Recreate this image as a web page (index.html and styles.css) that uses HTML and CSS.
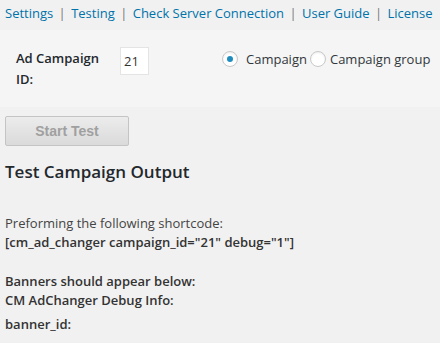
FILE: index.html
```html
<!DOCTYPE html>
<html lang="en">
<head>
    <meta charset="UTF-8">
    <title>CM Ad Changer - Testing</title>
    <link rel="stylesheet" href="styles.css">
</head>
<body>
    <div class="nav">
        <a href="#">Settings</a> <span class="sep">|</span>
        <a href="#">Testing</a> <span class="sep">|</span>
        <a href="#">Check Server Connection</a> <span class="sep">|</span>
        <a href="#">User Guide</a> <span class="sep">|</span>
        <a href="#">License</a>
    </div>

    <div class="panel">
        <label class="field-label" for="campaign-id">Ad Campaign ID:</label>
        <input class="id-input" id="campaign-id" type="text" value="21">
        <div class="radios">
            <label class="radio"><span class="dot checked"></span>Campaign</label>
            <label class="radio"><span class="dot"></span>Campaign group</label>
        </div>
    </div>

    <button class="btn" disabled>Start Test</button>

    <h2 class="title">Test Campaign Output</h2>

    <div class="output">
        <p>Preforming the following shortcode:<br>
            <strong>[cm_ad_changer campaign_id="21" debug="1"]</strong></p>
        <p><strong>Banners should appear below:<br>CM AdChanger Debug Info:</strong></p>
        <p class="debug-row"><strong>banner_id:</strong></p>
    </div>
</body>
</html>
```

FILE: styles.css
```css
body {
    margin: 0;
    background-color: #f1f1f1;
    font-family: "Open Sans", sans-serif;
    font-size: 13px;
    color: #444;
}

.nav {
    padding: 3px 5px 0;
    font-size: 13px;
    line-height: 20px;
    white-space: nowrap;
}

.nav a {
    color: #0073aa;
    text-decoration: none;
}

.nav .sep {
    color: #777;
    margin: 0 2px;
}

.panel {
    display: flex;
    align-items: flex-start;
    margin-top: 7px;
    padding: 17px 10px 10px 16px;
    height: 50px;
    background-color: #f5f5f5;
}

.field-label {
    flex-shrink: 0;
    width: 88px;
    margin-top: 1px;
    margin-right: 16px;
    font-size: 13px;
    font-weight: 600;
    line-height: 21px;
    color: #23282d;
}

.id-input {
    flex-shrink: 0;
    width: 21px;
    height: 20px;
    margin: 0;
    padding: 3px 3px;
    border: 1px solid #e4e4e4;
    background: #fff;
    font-family: "Open Sans", sans-serif;
    font-size: 13px;
    color: #333;
}

.radios {
    display: flex;
    margin-left: 73px;
    margin-top: 2px;
    font-size: 13px;
    color: #32373c;
    white-space: nowrap;
}

.radio {
    display: flex;
    align-items: center;
    line-height: 20px;
}

.dot {
    width: 14px;
    height: 14px;
    margin-right: 8px;
    border: 1px solid #c8c8c8;
    border-radius: 50%;
    background: #fff;
    box-shadow: inset 0 1px 2px rgba(0, 0, 0, 0.08);
    display: flex;
    align-items: center;
    justify-content: center;
}

.radio + .radio .dot {
    margin-left: 3px;
    margin-right: 4px;
}

.dot.checked::after {
    content: "";
    width: 6px;
    height: 6px;
    border-radius: 50%;
    background: #1e8cbe;
}

.btn {
    display: block;
    margin: 9px 0 0 5px;
    width: 124px;
    height: 30px;
    border: 1px solid #c4c4c4;
    border-radius: 2px;
    background: linear-gradient(#ececec, #dadada);
    font-family: "Liberation Sans", Arial, sans-serif;
    font-size: 14px;
    font-weight: bold;
    color: #a0a0a0;
}

.title {
    margin: 14px 5px 0;
    font-size: 17px;
    font-weight: 600;
    line-height: 24px;
    color: #23282d;
}

.output {
    margin-top: 30px;
    padding: 0 5px;
}

.output p {
    margin: 0 0 20px;
    line-height: 19px;
}

.output p:nth-child(2) {
    margin-bottom: 5px;
}

.output strong {
    font-weight: 600;
    color: #333;
}
```
